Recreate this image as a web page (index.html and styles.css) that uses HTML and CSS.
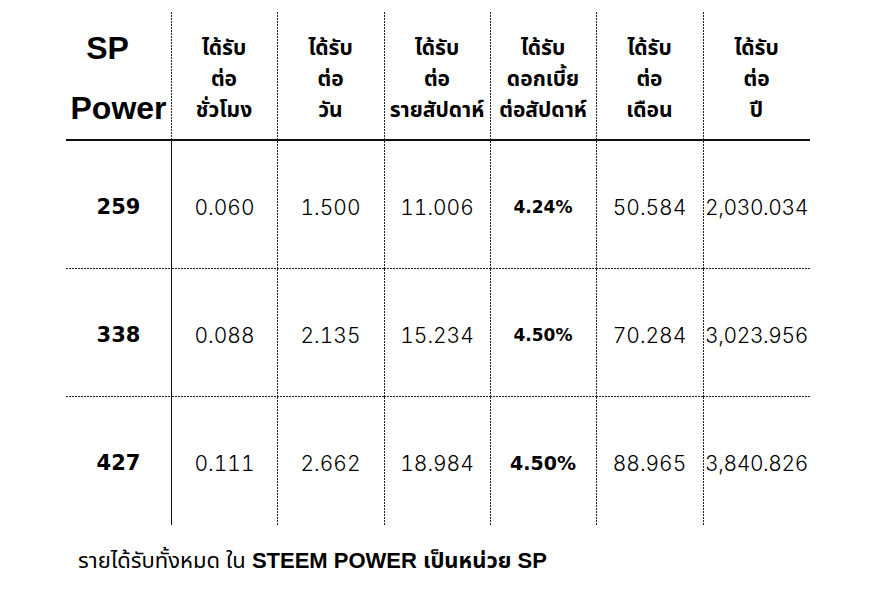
FILE: index.html
```html
<!DOCTYPE html>
<html lang="th">
<head>
<meta charset="utf-8">
<title>SP Power</title>
<link rel="stylesheet" href="styles.css">
</head>
<body>
<div class="page">
  <div class="table">
    <div class="cell head first"><div class="sp"><span class="sp-a">SP</span><span class="sp-b">Power</span></div></div>
    <div class="cell head v"><div class="th">ได้รับ<br>ต่อ<br>ชั่วโมง</div></div>
    <div class="cell head v"><div class="th">ได้รับ<br>ต่อ<br>วัน</div></div>
    <div class="cell head v"><div class="th">ได้รับ<br>ต่อ<br>รายสัปดาห์</div></div>
    <div class="cell head v"><div class="th">ได้รับ<br>ดอกเบี้ย<br>ต่อสัปดาห์</div></div>
    <div class="cell head v"><div class="th">ได้รับ<br>ต่อ<br>เดือน</div></div>
    <div class="cell head v"><div class="th">ได้รับ<br>ต่อ<br>ปี</div></div>

    <div class="cell d"><span class="bold">259</span></div>
    <div class="cell s d"><span class="num">0.060</span></div>
    <div class="cell v d"><span class="num">1.500</span></div>
    <div class="cell v d"><span class="num">11.006</span></div>
    <div class="cell v d"><span class="pct">4.24%</span></div>
    <div class="cell v d"><span class="num">50.584</span></div>
    <div class="cell v d"><span class="num last">2,030.034</span></div>

    <div class="cell d"><span class="bold">338</span></div>
    <div class="cell s d"><span class="num">0.088</span></div>
    <div class="cell v d"><span class="num">2.135</span></div>
    <div class="cell v d"><span class="num">15.234</span></div>
    <div class="cell v d"><span class="pct">4.50%</span></div>
    <div class="cell v d"><span class="num">70.284</span></div>
    <div class="cell v d"><span class="num last">3,023.956</span></div>

    <div class="cell"><span class="bold">427</span></div>
    <div class="cell s"><span class="num">0.111</span></div>
    <div class="cell v"><span class="num">2.662</span></div>
    <div class="cell v"><span class="num">18.984</span></div>
    <div class="cell v"><span class="pct big">4.50%</span></div>
    <div class="cell v"><span class="num">88.965</span></div>
    <div class="cell v"><span class="num last">3,840.826</span></div>
  </div>
  <p class="note">รายได้รับทั้งหมด ใน <strong>STEEM POWER เป็นหน่วย SP</strong></p>
</div>
</body>
</html>
```

FILE: styles.css
```css
html, body {
  margin: 0;
  padding: 0;
  background: #fff;
  color: #000;
}

.page {
  width: 882px;
  height: 608px;
  padding: 12px 0 0 66px;
  box-sizing: border-box;
  font-family: "Liberation Sans", "Noto Sans Thai", "Noto Sans", sans-serif;
}

.table {
  display: grid;
  grid-template-columns: 105px 106px 107px 106px 106px 107px 107px;
  grid-template-rows: 129px 128px 128px 128px;
}

.cell {
  display: flex;
  align-items: center;
  justify-content: center;
  text-align: center;
  box-sizing: border-box;
  background-repeat: no-repeat;
}

.head {
  border-bottom: 2px solid #111;
}

.v {
  background-image: linear-gradient(to bottom, #222 0 2px, transparent 2px 3px);
  background-size: 1px 3px;
  background-repeat: repeat-y;
  background-position: 0 0;
}

.d {
  background-image: linear-gradient(to right, #222 0 2px, transparent 2px 3px);
  background-size: 3px 1px;
  background-repeat: repeat-x;
  background-position: 0 100%;
}

.v.d {
  background-image:
    linear-gradient(to bottom, #222 0 2px, transparent 2px 3px),
    linear-gradient(to right, #222 0 2px, transparent 2px 3px);
  background-size: 1px 3px, 3px 1px;
  background-repeat: repeat-y, repeat-x;
  background-position: 0 0, 0 100%;
}

.s {
  border-left: 1px solid #111;
}

.sp {
  display: flex;
  flex-direction: column;
  align-items: center;
  font-weight: bold;
  font-size: 32px;
  line-height: 60px;
  padding-top: 4px;
}

.sp-a {
  margin-right: 22px;
}

.th {
  font-weight: bold;
  font-size: 21px;
  line-height: 31px;
  padding-top: 6px;
  white-space: nowrap;
}

.bold {
  font-family: "DejaVu Sans", sans-serif;
  font-weight: bold;
  font-size: 21px;
  padding-top: 4px;
}

.pct {
  font-family: "DejaVu Sans", sans-serif;
  font-weight: bold;
  font-size: 17px;
  padding-top: 4px;
}

.pct.big {
  font-size: 19px;
}

.num {
  font-family: "Inter", sans-serif;
  font-weight: 300;
  font-size: 21px;
  font-variant-numeric: tabular-nums;
  padding-top: 4px;
}

.num.last {
  letter-spacing: -0.4px;
}

.note {
  margin: 24px 0 0 12px;
  font-size: 22px;
  line-height: 24px;
  font-family: "Liberation Sans", "Noto Sans Thai", "Noto Sans", sans-serif;
}

.note strong {
  font-weight: bold;
}
```
